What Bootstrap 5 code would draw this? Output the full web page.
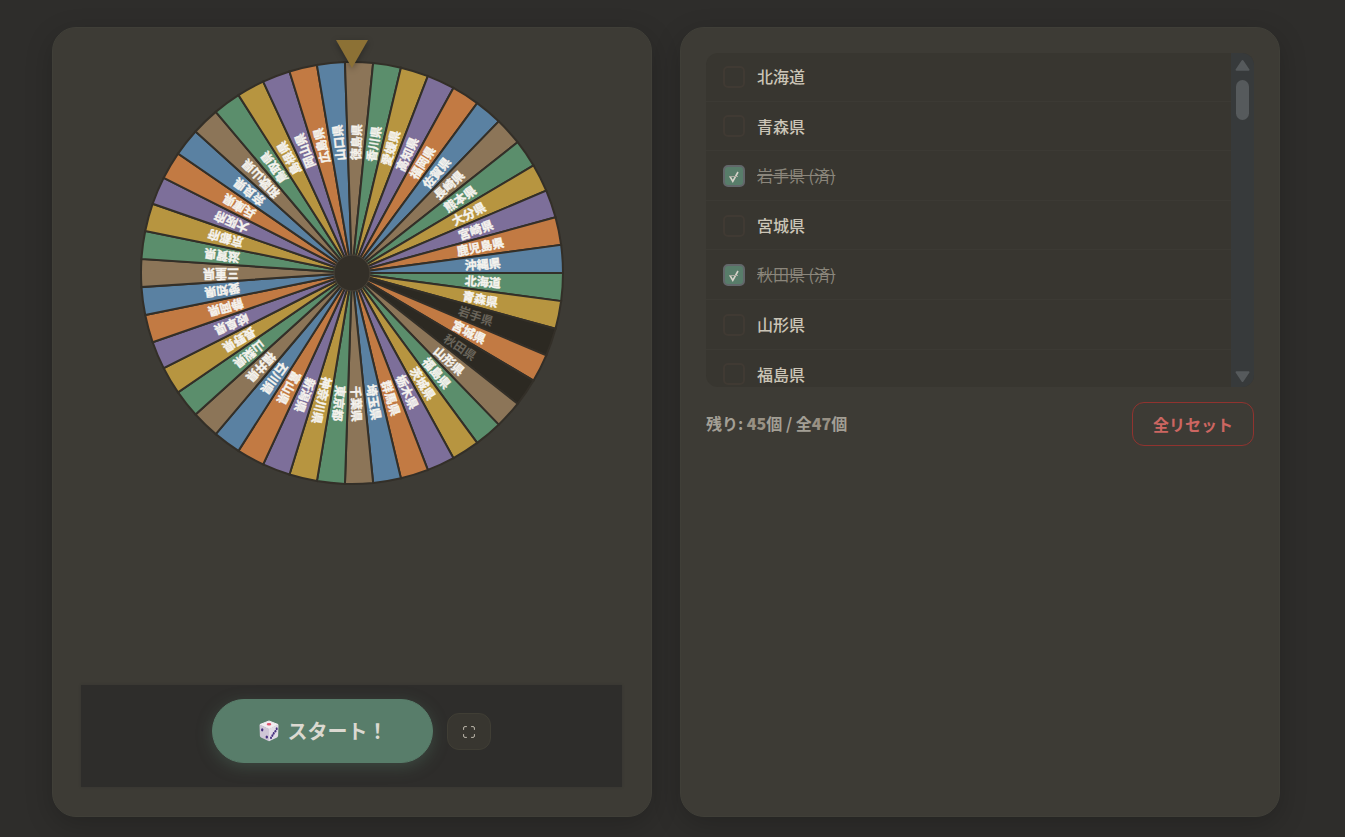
<!DOCTYPE html>
<html lang="ja">
<head>
<meta charset="utf-8">
<meta name="viewport" content="width=device-width, initial-scale=1">
<title>都道府県ルーレット</title>
<link href="https://cdn.jsdelivr.net/npm/bootstrap@5.3.0/dist/css/bootstrap.min.css" rel="stylesheet">
<style>
  body {
    background: #2e2d2b;
    color: #cbc5b7;
    font-family: "Noto Sans CJK JP", "Noto Sans", sans-serif;
    line-height: 1.6;
    padding-right: 13px;
  }
  .page-wrap { max-width: 1260px; padding: 27px 16px 20px; }
  .panel {
    background: #3d3b35;
    border: 1px solid #403f38;
    border-radius: 24px;
    box-shadow: 0 8px 28px rgba(0, 0, 0, .2);
    min-height: calc(100vh - 47px);
  }
  .panel-grid { --bs-gutter-x: 28px; --bs-gutter-y: 28px; }
  .wheel-panel { padding: 12px 29px 29px 28px; }
  .list-panel { padding: 25px; }

  .wheel-box { width: 100%; max-width: 424px; padding-top: 21px; }
  .wheel-disc { display: block; width: 100%; }
  .pointer-mark { top: 0; left: 50%; width: 32px; height: 28px; margin-left: -16px; filter: drop-shadow(0 2px 3px rgba(0, 0, 0, .3)); }
  .slice-label {
    font-size: 12px; font-weight: 700; text-anchor: middle; dominant-baseline: central;
    fill: #f5f3ee; stroke: #f5f3ee; stroke-width: .4px;
  }
  .slice-label.used { fill: #69645a; stroke: none; }

  .control-bar { background: #2e2d2b; padding: 14px 14px 24px; gap: 14px; box-shadow: 0 0 2px #35342f; }
  .btn-start {
    --bs-btn-color: #dbd9d1; --bs-btn-bg: #587d6a; --bs-btn-border-color: #587d6a;
    --bs-btn-hover-color: #e8e6de; --bs-btn-hover-bg: #628a76; --bs-btn-hover-border-color: #628a76;
    --bs-btn-font-size: 20px; --bs-btn-font-weight: 700; --bs-btn-line-height: 32px;
    --bs-btn-padding-x: 44px; --bs-btn-padding-y: 15px;
    width: 221px;
    box-shadow: 0 4px 16px rgba(88, 125, 106, .35);
  }
  .btn-full {
    --bs-btn-bg: #383630; --bs-btn-border-color: #403e35; --bs-btn-color: #bdb8ac;
    --bs-btn-hover-bg: #444239; --bs-btn-hover-border-color: #504d42;
    --bs-btn-border-radius: 12px; --bs-btn-padding-x: 14px; --bs-btn-padding-y: 0;
    width: 44px; height: 37px;
  }
  .full-icon { margin-top: 2px; }

  .list-shell { background: #383630; border-radius: 12px; height: 334px; }
  .pref-list { overflow-y: auto; scrollbar-width: none; }
  .pref-list::-webkit-scrollbar { display: none; }
  .pref-row { padding: 11px 17px; gap: 12px; border-bottom: 1px solid #3c3a34; cursor: pointer; font-weight: 500; }
  .pref-row + .pref-row { padding-top: 12px; }
  .pref-row.used { color: #8b867b; font-weight: 400; text-decoration: line-through; }
  .pref-check.form-check-input {
    width: 22px; height: 22px; margin: 0; border: 2px solid #403a33; border-radius: 5px; background-color: transparent;
  }
  .pref-check.form-check-input:checked {
    background-color: #587d6a; border-color: #62676a;
    background-image: url("data:image/svg+xml,%3Csvg xmlns='http://www.w3.org/2000/svg' viewBox='0 0 18 18'%3E%3Cpath d='M5 9.5l2.8 4.8L13 5' fill='none' stroke='%23d6d3ca' stroke-width='1.6'/%3E%3Cpath d='M4 9.5h9' stroke='%23a9aaa0'/%3E%3C/svg%3E");
  }
  .scroll-track { width: 23px; background: #373a3b; padding: 7px 5px 6px; }
  .scroll-track button { width: 13px; height: 10px; }
  .scroll-track svg { display: block; width: 15px; height: 11px; margin-left: -1px; }
  .scroll-thumb { width: 13px; height: 40px; margin-top: 10px; border-radius: 7px; background: #565a5c; }

  .summary-row { margin-top: 15px; }
  .count-line { color: #a39f95; font-weight: 700; }
  .count-line b { color: #989083; }
  .btn-reset {
    --bs-btn-color: #cc6661; --bs-btn-border-color: #90332f; --bs-btn-bg: transparent;
    --bs-btn-hover-color: #e58681; --bs-btn-hover-border-color: #ad403b; --bs-btn-hover-bg: #46352f;
    --bs-btn-border-radius: 12px; --bs-btn-font-weight: 700; --bs-btn-line-height: 26px;
    --bs-btn-padding-x: 20px; --bs-btn-padding-y: 8px;
  }
</style>
</head>
<body>
<main class="container-fluid page-wrap">
  <div class="row panel-grid">
    <section class="col-12 col-md-6">
      <div class="panel wheel-panel d-flex flex-column align-items-center">
        <div class="wheel-box position-relative">
          <svg id="wheel" class="wheel-disc" viewBox="-212 -212 424 424" role="img" aria-label="ルーレット"></svg>
          <svg class="pointer-mark position-absolute" viewBox="0 0 32 28" aria-hidden="true"><path d="M0 0h32L16 28z" fill="#8c7135"/></svg>
        </div>
        <div class="control-bar d-flex align-items-center justify-content-center w-100 mt-auto">
          <button type="button" class="btn btn-start rounded-pill d-flex align-items-center justify-content-center gap-2">
            <svg width="22" height="22" viewBox="0 0 22 22" aria-hidden="true">
              <path d="M11 1l9 3.5-9 4.2L2 4.5z" fill="#f1edf1" stroke="#f1edf1" stroke-linejoin="round"/>
              <path d="M1.5 4.5L11 8.7v12.6l-8-3.8q-1-.5-1.1-1.7z" fill="#cfc6d6"/>
              <path d="M20.5 4.5L11 8.7v12.6l8-3.8q1-.5 1.1-1.7z" fill="#e2dce6"/>
              <ellipse cx="11" cy="4.3" rx="2.3" ry="1.2" fill="#e0546d"/>
              <g fill="#473080"><ellipse cx="4.2" cy="9.8" rx="1.2" ry="1.6"/><ellipse cx="8.8" cy="17" rx="1.2" ry="1.6"/><ellipse cx="18.7" cy="8.8" rx="1" ry="1.5"/><ellipse cx="17.4" cy="11.2" rx="1" ry="1.3"/><ellipse cx="15.7" cy="13.4" rx="1" ry="1.3"/><ellipse cx="14.4" cy="15.6" rx="1" ry="1.3"/><ellipse cx="13" cy="17.8" rx="1" ry="1.4"/></g>
            </svg>
            <span>スタート！</span>
          </button>
          <button type="button" class="btn btn-full d-flex align-items-center justify-content-center" aria-label="全画面">
            <svg class="full-icon" width="12" height="12" viewBox="0 0 12 12" fill="none" stroke="currentColor" stroke-linecap="round" aria-hidden="true"><path d="M.6 3.5V2Q.6.6 2 .6h1.5M8.5.6H10Q11.4.6 11.4 2v1.5M11.4 8.5V10q0 1.4-1.4 1.4H8.5M3.5 11.4H2Q.6 11.4.6 10V8.5"/></svg>
          </button>
        </div>
      </div>
    </section>
    <section class="col-12 col-md-6">
      <div class="panel list-panel">
        <div class="list-shell d-flex overflow-hidden">
          <div id="prefs" class="pref-list flex-grow-1"></div>
          <div class="scroll-track d-flex flex-column">
            <button type="button" class="border-0 bg-transparent p-0" data-step="-50" aria-label="上へ"><svg viewBox="0 0 14 10"><path d="M7 1l5.5 8h-11z" fill="#565a5c" stroke="#565a5c" stroke-width="2" stroke-linejoin="round"/></svg></button>
            <div class="scroll-thumb"></div>
            <button type="button" class="border-0 bg-transparent p-0 mt-auto" data-step="50" aria-label="下へ"><svg viewBox="0 0 14 10"><path d="M7 9l5.5-8h-11z" fill="#565a5c" stroke="#565a5c" stroke-width="2" stroke-linejoin="round"/></svg></button>
          </div>
        </div>
        <div class="summary-row d-flex align-items-center justify-content-between">
          <div class="count-line">残り: <b>45</b>個 / 全<b>47</b>個</div>
          <button type="button" class="btn btn-reset">全リセット</button>
        </div>
      </div>
    </section>
  </div>
</main>
<script src="https://cdn.jsdelivr.net/npm/bootstrap@5.3.0/dist/js/bootstrap.bundle.min.js"></script>
<script>
  const names = '北海道 青森県 岩手県 宮城県 秋田県 山形県 福島県 茨城県 栃木県 群馬県 埼玉県 千葉県 東京都 神奈川県 新潟県 富山県 石川県 福井県 山梨県 長野県 岐阜県 静岡県 愛知県 三重県 滋賀県 京都府 大阪府 兵庫県 奈良県 和歌山県 鳥取県 島根県 岡山県 広島県 山口県 徳島県 香川県 愛媛県 高知県 福岡県 佐賀県 長崎県 熊本県 大分県 宮崎県 鹿児島県 沖縄県'.split(' ');
  const used = new Set(['岩手県', '秋田県']);
  const palette = ['#5b8e6c', '#b79540', '#7d6f9a', '#c27a43', '#5a81a2', '#8c7558'];
  const R = 211, step = 2 * Math.PI / names.length;
  const at = a => `${(R * Math.cos(a)).toFixed(2)} ${(R * Math.sin(a)).toFixed(2)}`;

  let slices = '', labels = '', rows = '';
  names.forEach((name, i) => {
    const gone = used.has(name);
    const fill = gone ? '#2c2922' : palette[i % 6];
    slices += `<path d="M0 0L${at(i * step)}A${R} ${R} 0 0 1 ${at((i + 1) * step)}Z" fill="${fill}" stroke="#332f28" stroke-width="2"/>`;
    const deg = ((i + .5) * step * 180 / Math.PI).toFixed(2);
    labels += `<text class="slice-label${gone ? ' used' : ''}" transform="rotate(${deg})" x="131" y="-1">${name}</text>`;
    rows += `<label class="pref-row d-flex align-items-center${gone ? ' used' : ''}" for="p${i}">
      <input class="form-check-input pref-check flex-shrink-0" type="checkbox" id="p${i}"${gone ? ' checked' : ''}>
      <span>${name}${gone ? ' (済)' : ''}</span></label>`;
  });
  document.getElementById('wheel').innerHTML = slices + labels + '<circle r="18" fill="#332f28" stroke="#484238"/>';
  const list = document.getElementById('prefs');
  list.innerHTML = rows;
  document.querySelectorAll('[data-step]').forEach(b =>
    b.addEventListener('click', () => list.scrollBy(0, +b.dataset.step)));
</script>
</body>
</html>
